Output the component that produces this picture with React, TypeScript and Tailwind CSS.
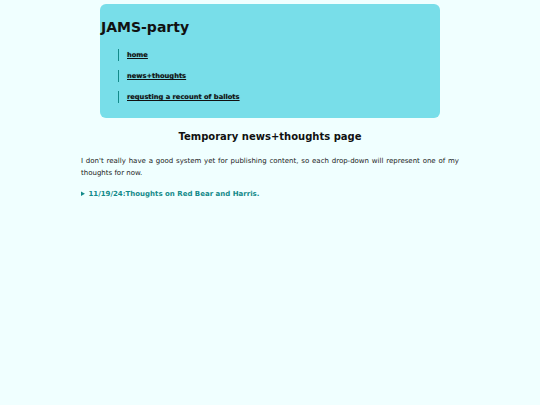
export default function App() {
  const links = ["home", "news+thoughts", "requsting a recount of ballots"];

  return (
    <div className="min-h-[405px] bg-[#f0ffff] font-['DejaVu_Sans',Verdana,sans-serif] text-[#111]">
      <div className="mx-auto w-[378px] pt-1">
        <header className="mx-auto w-[340px] rounded-md bg-[#78dee9] pt-[10px] pb-[15px]">
          <h1 className="text-[14px] font-bold leading-[26px] pl-px">JAMS-party</h1>
          <ul className="mt-[9px] ml-[18px] flex flex-col gap-[9px]">
            {links.map((l) => (
              <li key={l} className="border-l border-[#138a8a] pl-2 text-[6.7px] leading-[12px]">
                <a href="#" className="font-bold text-[#111] underline [text-shadow:0_0_1px_rgba(0,0,0,0.35)]">
                  {l}
                </a>
              </li>
            ))}
          </ul>
        </header>

        <h2 className="mt-[10px] text-center text-[10px] font-bold leading-[18px]">Temporary news+thoughts page</h2>
        <p className="mt-[9px] text-justify text-[7px] leading-[12px] text-[#1a1a1a]">
          I don't really have a good system yet for publishing content, so each drop-down will represent one of my thoughts for now.
        </p>
        <details className="mt-[10px] text-[7px] font-bold text-[#138a8a]">
          <summary className="cursor-pointer">11/19/24:Thoughts on Red Bear and Harris.</summary>
        </details>
      </div>
    </div>
  );
}
